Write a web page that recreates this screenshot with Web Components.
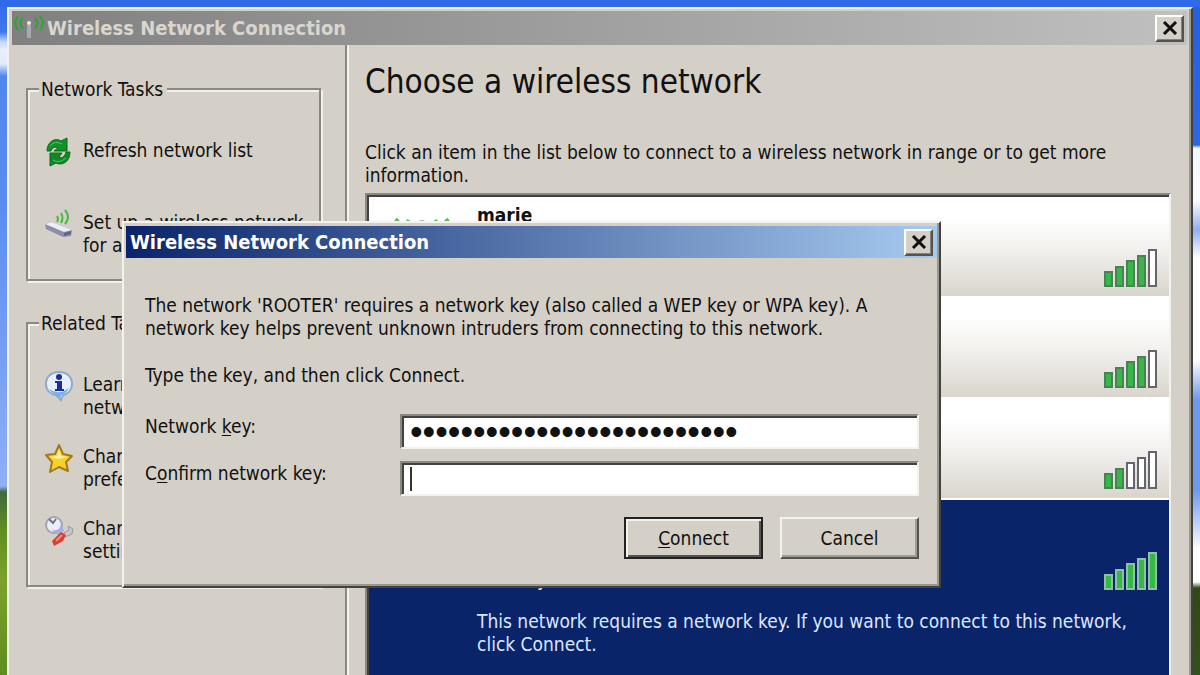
<!DOCTYPE html>
<html lang="en">
<head>
<meta charset="utf-8">
<title>Wireless Network Connection</title>
<style>
  html, body { margin: 0; height: 100%; overflow: hidden; }
  body {
    font: 19px/23px "DejaVu Sans Condensed", "DejaVu Sans", Tahoma, sans-serif;
    color: #111;
  }
</style>
</head>
<body>
<xp-desktop>
  <xp-window slot="back" inactive heading="Wireless Network Connection">
    <antenna-icon slot="icon"></antenna-icon>
    <network-chooser></network-chooser>
  </xp-window>
  <xp-window slot="front" heading="Wireless Network Connection">
    <key-form></key-form>
  </xp-window>
</xp-desktop>

<script>
const define = (name, html, setup) => {
  const template = document.createElement('template');
  template.innerHTML = html;
  customElements.define(name, class extends HTMLElement {
    connectedCallback() {
      if (this.shadowRoot) return;
      const root = this.attachShadow({ mode: 'open' });
      root.append(template.content.cloneNode(true));
      if (setup) setup(this, root);
    }
  });
};

define('antenna-icon', `
<style>:host{display:block;width:32px;height:24px}svg{display:block}</style>
<svg width="32" height="24" viewBox="0 0 32 24" fill="none" aria-hidden="true">
  <g stroke="#2fa336" stroke-width="2">
    <path d="M5 0Q-1 7 5 14M10 2Q5 7 10 13M22 2Q27 7 22 13M27 0Q33 7 27 14"/>
  </g>
  <path d="M16 9V22" stroke="#a9a9b2" stroke-width="4"/>
  <circle cx="16" cy="7" r="2" fill="#e8e8e8"/>
</svg>`);

define('task-icon', `
<style>:host{display:block;width:30px;height:32px}svg{display:none}
:host([name=refresh]) .refresh,:host([name=setup]) .setup,:host([name=info]) .info,:host([name=star]) .star,:host([name=tools]) .tools{display:block}</style>
<svg class="refresh" width="30" height="32" viewBox="0 0 30 32">
  <path d="M3 14C3 5 11 0 17 4L23 1V14H10L14 11C11 9 8 11 7 14Z" fill="#12912a" stroke="#0a6b18"/>
  <path d="M26 15C26 25 18 29 12 26L6 29V16H18L15 20C18 22 21 19 22 15Z" fill="#0f8a22" stroke="#0a6b18"/>
  <path d="M6 9Q11 3 18 7M9 23Q15 27 22 21" stroke="#55c95c" fill="none"/>
</svg>
<svg class="setup" width="30" height="32" viewBox="0 0 30 32">
  <path d="M1 15L8 13L28 21L27 27L19 28L2 20Z" fill="#8d8da8"/>
  <path d="M1 15L8 13L28 21L20 23Z" fill="#ecedf8"/>
  <path d="M20 24L27 22V25L20 27Z" fill="#62628a"/>
  <path d="M13 7Q15 10 13 13M17 4Q20 9 17 14M21 1Q27 8 21 15" stroke="#49b83f" stroke-width="2" fill="none"/>
</svg>
<svg class="info" width="30" height="32" viewBox="0 0 30 32">
  <path d="M15 1C23 1 28 6 28 13C28 19 24 23 19 24L17 29L12 24C6 23 2 19 2 13C2 6 7 1 15 1Z" fill="#e6f1fc" stroke="#8ba8cc" stroke-width="2"/>
  <path d="M5 18Q15 25 25 17Q22 23 18 23L16 27L12 23Q7 22 5 18Z" fill="#76b0e8"/>
  <circle cx="15" cy="6" r="3" fill="#1c2f96"/>
  <path d="M11 10H18V18H20V20H11V18H13V12H11Z" fill="#1c2f96"/>
</svg>
<svg class="star" width="30" height="32" viewBox="0 0 30 32">
  <path d="M15 2L19 11L28 13L22 19L24 28L15 24L6 29L8 19L2 12L11 11Z" fill="#f8d22c" stroke="#a17a1c" stroke-width="2" stroke-linejoin="round"/>
  <path d="M15 6L17 13L24 14L14 16L6 14L13 13Z" fill="#fff2a0"/>
</svg>
<svg class="tools" width="30" height="32" viewBox="0 0 30 32">
  <path d="M20 18L25 15L24 11L29 14L28 19L21 22Z" fill="#c5c5c9" stroke="#9a9aa0"/>
  <circle cx="10" cy="10" r="8" fill="#eceef8" stroke="#a2a4b4" stroke-width="2"/>
  <path d="M5 4L9 8L12 4" stroke="#6e7080" stroke-width="2" fill="none"/>
  <path d="M7 14Q15 18 17 9L20 16L14 20Z" fill="#a3ade6"/>
  <path d="M8 26L17 17L22 20L19 26L10 31Z" fill="#d8402f"/>
  <path d="M12 26L18 20" stroke="#f29184" stroke-width="2"/>
</svg>`);

define('caption-close', `
<style>
:host{display:block}
button{display:block;box-sizing:border-box;width:29px;height:27px;padding:0;background:#d4d0c8;border:2px solid;border-color:#fff #55534f #55534f #fff;box-shadow:inset -1px -1px #85827c}
svg{display:block;margin:auto}
</style>
<button type="button" aria-label="Close"><svg width="16" height="14" viewBox="0 0 16 14"><path d="M2 1L14 13M14 1L2 13" stroke="#111" stroke-width="3"/></svg></button>`);

define('xp-window', `
<style>
:host{display:flex;flex-direction:column;box-sizing:border-box;background:#d4d0c8;border:2px solid;border-color:#f4f2ee #44423e #44423e #f4f2ee;box-shadow:inset -2px -2px #9a978f;padding:3px 2px 2px}
header{display:flex;align-items:center;gap:2px;height:32px;flex:none;padding:0 4px;color:#fff;background:linear-gradient(90deg,#0a246a,#a6caf0)}
:host([inactive]) header{height:34px;padding:0 3px 0 1px;background:linear-gradient(90deg,#808080,#c0c0c0);color:#d9d6cf}
:host([inactive]){padding:2px 4px 0 3px;border-bottom:0;box-shadow:inset -2px 0 #9a978f}
h2{margin:0;flex:1;font-size:20px;line-height:23px;font-weight:bold;white-space:nowrap}
.body{flex:1;min-height:0;display:flex}
::slotted(:not([slot])){flex:1;min-width:0}
</style>
<header><slot name="icon"></slot><h2></h2><caption-close></caption-close></header>
<div class="body"><slot></slot></div>`,
(host, root) => { root.querySelector('h2').textContent = host.getAttribute('heading'); });

define('xp-desktop', `
<style>
:host{display:block;position:relative;height:100%;overflow:hidden;
  background:
  linear-gradient(#2f6ae8,#2f6ae8) top/100% 7px no-repeat,
  linear-gradient(#2f6ae8 0,#3f78ea 32px,#c4d8f8 42px,#e8f0fb 50px,#e0eafa 64px,#4f86ee 76px,#5a8cf0 200px,#7ba2f2 380px,#8fb0f4 486px,#3f6a3c 492px,#5f8f20 530px,#7ba22a 580px,#5e8d1e 675px) left/50% 100% no-repeat,
  linear-gradient(#2560e0 0,#2c67e4 145px,#f2f6fd 148px,#fdfdff 200px,#8fb0f0 230px,#fff 258px,#fff 360px,#6c98ee 400px,#6c98ee 490px,#fff 550px,#fff 582px,#2e4a14 588px,#31521a 675px) right/50% 100% no-repeat}
::slotted([slot=back]){position:absolute;inset:7px 7px 0 7px}
::slotted([slot=front]){position:absolute;top:221px;left:122px;right:259px;height:367px}
</style>
<slot name="back"></slot><slot name="front"></slot>`);

define('task-link', `
<style>
:host{display:block;min-height:46px}
a{display:grid;grid-template-columns:30px 1fr;column-gap:9px;color:inherit;text-decoration:none;white-space:nowrap}
task-icon{margin-top:-2px}
</style>
<a href="#"><task-icon></task-icon><span><slot></slot></span></a>`,
(host, root) => { root.querySelector('task-icon').setAttribute('name', host.getAttribute('icon')); });

define('task-group', `
<style>
:host{display:block}
fieldset{margin:0;min-width:0;padding:38px 0 22px 16px;border:2px solid #8b8880;box-shadow:inset 2px 2px #f2f0ec,2px 2px #f2f0ec}
legend{margin-left:-5px;padding:0 4px 0 2px;line-height:24px;height:24px;background:#d4d0c8}
.items{display:flex;flex-direction:column;gap:26px}
</style>
<fieldset><legend></legend><div class="items"><slot></slot></div></fieldset>`,
(host, root) => { root.querySelector('legend').textContent = host.getAttribute('heading'); });

define('signal-meter', `
<style>
:host{display:flex;align-items:flex-end;gap:2px;height:38px}
i{box-sizing:border-box;width:9px;border:2px solid #66646e;background:#fff}
:host([level="2"]) i:nth-of-type(-n+2),:host([level="4"]) i:nth-of-type(-n+4),:host([level="5"]) i{border-color:var(--meter-edge,#4c8058);background:#35b845}
i:nth-of-type(1){height:16px}i:nth-of-type(2){height:21px}i:nth-of-type(3){height:27px}i:nth-of-type(4){height:32px}i:nth-of-type(5){height:38px}
</style><i></i><i></i><i></i><i></i><i></i>`);

define('network-row', `
<style>
:host{display:grid;grid-template-columns:66px minmax(0,1fr) 53px;column-gap:22px;box-sizing:border-box;height:101px;padding:7px 12px 0 20px;background:linear-gradient(#fff 20%,#f3f2ef 50%,#d9d5cc);border-bottom:2px solid #fff}
:host([selected]){height:auto;flex:1;background:#0a246a;color:#dce6ff;border:0;--meter-edge:#8fbfa4}
.icon{padding-top:12px}
signal-meter{margin-top:45px}
.text{white-space:nowrap}
</style>
<div class="icon"><svg width="66" height="44" viewBox="0 0 66 44" fill="none"><path d="M9 3Q-2 18 9 34M20 4Q11 18 20 32M46 4Q55 18 46 32M57 3Q68 18 57 34" stroke="#5fba4f" stroke-width="4"/><circle cx="33" cy="9" r="5" fill="#aaa"/><path d="M33 12V40" stroke="#aaa" stroke-width="6"/></svg></div>
<div class="text"><slot></slot></div><signal-meter></signal-meter>`,
(host, root) => root.querySelector('signal-meter').setAttribute('level', host.getAttribute('level')));

define('network-chooser', `
<style>
:host{display:flex;min-height:0}
nav{box-sizing:border-box;width:335px;flex:none;padding:32px 24px 0 14px;border-right:2px solid #8b8880;display:flex;flex-direction:column;gap:30px}
main{flex:1;min-width:0;display:flex;flex-direction:column;padding:0 16px 0 16px;border-left:2px solid #f4f2ee}
h1{margin:19px 0 0;font-size:33px;line-height:36px;font-weight:normal}
p{margin:41px 0 6px}
.list{flex:1;display:flex;flex-direction:column;border:2px solid;border-color:#8b8880 #f4f2ee #f4f2ee #8b8880;border-bottom:0;box-shadow:inset 2px 2px #44423e;padding:2px 0 0 2px}
.security,.note{display:block}
.security{margin-top:38px;color:#f0e6a8}
.note{margin-top:19px}
</style>
<nav>
  <task-group heading="Network Tasks">
    <task-link icon="refresh">Refresh network list</task-link>
    <task-link icon="setup">Set up a wireless network<br>for a home or small office</task-link>
  </task-group>
  <task-group heading="Related Tasks">
    <task-link icon="info">Learn about wireless<br>networking</task-link>
    <task-link icon="star">Change the order of<br>preferred networks</task-link>
    <task-link icon="tools">Change advanced<br>settings</task-link>
  </task-group>
</nav>
<main>
  <h1>Choose a wireless network</h1>
  <p>Click an item in the list below to connect to a wireless network in range or to get more<br>information.</p>
  <div class="list">
    <network-row level="4"><b>marie</b></network-row>
    <network-row level="4"></network-row>
    <network-row level="2"></network-row>
    <network-row level="5" selected><b>ROOTER</b><span class="security">Security-enabled</span><span class="note">This network requires a network key. If you want to connect to this network,<br>click Connect.</span></network-row>
  </div>
</main>`);

define('key-form', `
<style>
:host{display:block}
form{padding:36px 18px 0 19px}
p{margin:0 0 24px}
p + p{margin-bottom:27px}
.row{display:grid;grid-template-columns:1fr 519px;align-items:start;margin-bottom:12px}
label{padding-top:1px}
u{text-underline-offset:2px}
input{box-sizing:border-box;width:100%;height:35px;margin:0;padding:0 8px;font-family:"Liberation Sans",Arial,sans-serif;font-size:36px;line-height:31px;color:#111;background:#fff;border:2px solid;border-color:#8b8880 #f4f2ee #f4f2ee #8b8880;border-radius:0;box-shadow:inset 2px 2px #44423e;outline:0}
#confirm{background:linear-gradient(#333,#333) 8px 4px/2px 24px no-repeat #fff}
.actions{display:flex;justify-content:flex-end;gap:17px;padding-top:9px}
button{box-sizing:border-box;width:139px;height:42px;font:inherit;color:inherit;padding:0;background:#d4d0c8;border:2px solid;border-color:#f4f2ee #55534f #55534f #f4f2ee;box-shadow:inset -2px -2px #a09d95}
.default{border-color:#222;box-shadow:inset 2px 2px #f4f2ee,inset -2px -2px #55534f}
</style>
<form>
  <p>The network 'ROOTER' requires a network key (also called a WEP key or WPA key). A<br>network key helps prevent unknown intruders from connecting to this network.</p>
  <p>Type the key, and then click Connect.</p>
  <div class="row"><label for="key">Network <u>k</u>ey:</label><input id="key" type="password" value="abcdefghijklmnopqrstuvwxyz"></div>
  <div class="row"><label for="confirm">C<u>o</u>nfirm network key:</label><input id="confirm" type="password"></div>
  <div class="actions"><button class="default" type="button"><u>C</u>onnect</button><button type="button">Cancel</button></div>
</form>`);
</script>
</body>
</html>
